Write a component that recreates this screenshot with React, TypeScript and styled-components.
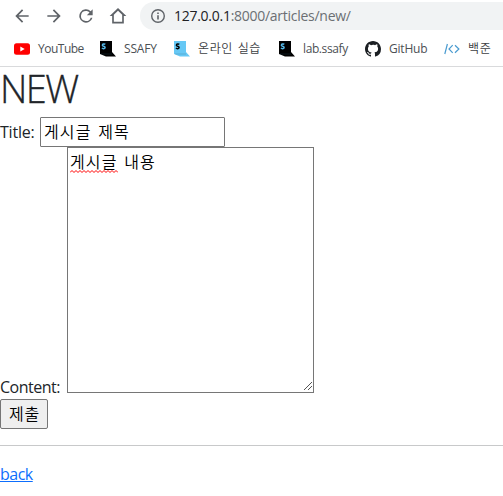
import React from 'react';
import styled, { createGlobalStyle } from 'styled-components';

const GlobalStyle = createGlobalStyle`
  *, *::before, *::after { box-sizing: border-box; }
  html, body { margin: 0; background: #fff; overflow: hidden; }
  body {
    font-family: "Open Sans", "Noto Sans CJK KR", sans-serif;
    font-size: 16px;
    line-height: 24px;
    color: #212529;
  }
`;

const Browser = styled.header`
  height: 67px;
  border-bottom: 1px solid #d9dadc;
`;
const Toolbar = styled.div`
  height: 32px;
  display: flex;
  align-items: center;
`;
const NavButtons = styled.div`
  display: flex;
  gap: 12px;
  padding-left: 12px;
  width: 140px;
  flex: none;
  svg { display: block; flex: none; }
`;
const AddressBar = styled.div`
  flex: 1;
  height: 28px;
  align-self: flex-end;
  margin-bottom: 2px;
  border-radius: 14px 0 0 14px;
  background: #f1f3f4;
  display: flex;
  align-items: center;
  padding-left: 10px;
  gap: 8px;
`;
const Url = styled.div`
  font-size: 14px;
  line-height: 20px;
  letter-spacing: -0.27px;
  color: #6b6f73;
  white-space: nowrap;
  b { font-weight: 400; color: #202124; }
`;
const Bookmarks = styled.nav`
  height: 34px;
  display: flex;
  padding-left: 14px;
  align-items: center;
`;
const Bookmark = styled.a<{ $width: number; $spacing?: number; $korean?: boolean }>`
  display: flex;
  flex: none;
  align-items: center;
  gap: 8px;
  width: ${(p) => p.$width}px;
  height: 16px;
  font-size: 12px;
  line-height: 16px;
  letter-spacing: ${(p) => p.$spacing ?? 0}px;
  word-spacing: 1px;
  color: ${(p) => (p.$korean ? '#3c4043' : '#4c5054')};
  font-weight: ${(p) => (p.$korean ? 350 : 400)};
  white-space: nowrap;
  svg { display: block; flex: none; }
`;

const Heading = styled.h1`
  margin: 0 0 2px;
  height: 48px;
  font-size: 38px;
  line-height: 43px;
  font-weight: 300;
  letter-spacing: -1.6px;
  -webkit-text-stroke: 0.3px #212529;
`;
const Row = styled.div<{ $end?: boolean }>`
  display: flex;
  align-items: ${(p) => (p.$end ? 'flex-end' : 'center')};
`;
const Label = styled.label<{ $width: number; $spacing: number; $drop?: boolean }>`
  width: ${(p) => p.$width}px;
  flex: none;
  font-size: 16px;
  line-height: 22px;
  letter-spacing: ${(p) => p.$spacing}px;
  margin-bottom: ${(p) => (p.$drop ? -5 : 0)}px;
  white-space: nowrap;
`;
const TextInput = styled.input`
  width: 185px;
  height: 30px;
  padding: 0 3px 2px;
  border: 1px solid #767676;
  border-radius: 1px;
  outline: 0;
  background: #fff;
  color: #000;
  font: 350 16px/24px "Noto Sans CJK KR", sans-serif;
  letter-spacing: 1.1px;
  word-spacing: 2px;
`;
const TextArea = styled.div`
  width: 247px;
  height: 246px;
  padding: 1px 2px 2px;
  border: 1px solid #767676;
  display: flex;
  flex-direction: column;
  justify-content: space-between;
  color: #000;
  font: 350 16px/24px "Noto Sans CJK KR", sans-serif;
  letter-spacing: 1.1px;
  word-spacing: 2px;
`;
const Misspelled = styled.span`
  display: inline-block;
  position: relative;
`;
const Squiggle = styled.svg`
  position: absolute;
  left: 0;
  bottom: 0;
`;
const Grip = styled.svg`
  display: block;
  align-self: flex-end;
  margin: 0 -2px -2px 0;
`;
const Submit = styled.button`
  display: block;
  width: 48px;
  height: 30px;
  margin-top: 6px;
  padding: 0 0 2px 1px;
  border: 1px solid #767676;
  border-radius: 2px;
  background: #efefef;
  color: #000;
  font: 350 16px/24px "Noto Sans CJK KR", sans-serif;
  letter-spacing: 0.8px;
`;
const Divider = styled.hr`
  margin: 16px 0;
  border: 0;
  height: 1px;
  background: #c8c9ca;
`;
const Back = styled.a`
  display: inline-block;
  font-size: 16px;
  letter-spacing: -0.5px;
  color: #0d6efd;
  text-decoration: underline;
`;

const icon = { fill: '#5f6368', width: 20, height: 20, viewBox: '0 0 24 24' };

function SsafyIcon({ page, letter }: { page: string; letter: string }) {
  return (
    <svg width="16" height="16" viewBox="0 0 16 16">
      <path d="M0 0H12V11L16 15.5H6L0 13Z" fill={page} />
      <path d="M5.3 3.4C4.6 2.8 2.4 2.9 2.4 4.2C2.4 5.5 5.1 5 5.1 6.6C5.1 7.9 2.7 7.9 2 7.1" fill="none" stroke={letter} strokeWidth="1.5" />
      <path d="M1 13H12" stroke={letter} strokeOpacity=".25" strokeWidth=".5" />
    </svg>
  );
}

export default function App() {
  return (
    <>
      <GlobalStyle />
      <Browser>
        <Toolbar>
          <NavButtons>
            <svg {...icon}><path d="M20 11H7.83l5.59-5.59L12 4l-8 8 8 8 1.41-1.41L7.83 13H20z" /></svg>
            <svg {...icon}><path d="M4 11h12.17l-5.59-5.59L12 4l8 8-8 8-1.41-1.41L16.17 13H4z" /></svg>
            <svg {...icon}><path d="M17.65 6.35A8 8 0 1 0 19.73 14h-2.08A6 6 0 1 1 12 6c1.66 0 3.14.69 4.22 1.78L13 11h7V4z" /></svg>
            <svg {...icon}><path d="M12 2.5 2 12h3v9h14v-9h3zM7 19v-8.4l5-4.9 5 4.9V19z" /></svg>
          </NavButtons>
          <AddressBar>
            <svg width="16" height="16" viewBox="0 0 16 16">
              <circle cx="8" cy="8" r="6.3" fill="none" stroke="#5f6368" strokeWidth="1.4" />
              <path d="M7.2 7.2h1.6v4.2H7.2zM7.2 4.5h1.6v1.6H7.2z" fill="#5f6368" />
            </svg>
            <Url><b>127.0.0.1</b>:8000/articles/new/</Url>
          </AddressBar>
        </Toolbar>
        <Bookmarks>
          <Bookmark $width={86} $spacing={-0.5}>
            <svg width="16" height="16" viewBox="0 0 16 16"><rect y="2.3" width="16" height="11.4" rx="2.5" fill="#f00" /><path d="m6.3 5.6 4.4 2.4-4.4 2.4z" fill="#fff" /></svg>
            YouTube
          </Bookmark>
          <Bookmark $width={74} $spacing={-0.2}><SsafyIcon page="#000" letter="#55b8e8" />SSAFY</Bookmark>
          <Bookmark $width={105} $spacing={0.6} $korean><SsafyIcon page="#66c8f5" letter="#000" />온라인 실습</Bookmark>
          <Bookmark $width={86} $spacing={-0.4}><SsafyIcon page="#000" letter="#55b8e8" />lab.ssafy</Bookmark>
          <Bookmark $width={79} $spacing={-0.2}>
            <svg width="16" height="16" viewBox="0 0 16 16" fill="#1b1f23"><path d="M8 0C3.58 0 0 3.58 0 8c0 3.54 2.29 6.53 5.47 7.59.4.07.55-.17.55-.38 0-.19-.01-.82-.01-1.49-2.01.37-2.53-.49-2.69-.94-.09-.23-.48-.94-.82-1.13-.28-.15-.68-.52-.01-.53.63-.01 1.08.58 1.23.82.72 1.21 1.87.87 2.33.66.07-.52.28-.87.51-1.07-1.78-.2-3.64-.89-3.64-3.95 0-.87.31-1.59.82-2.15-.08-.2-.36-1.02.08-2.12 0 0 .67-.21 2.2.82A7.6 7.6 0 0 1 8 3.87c.68 0 1.36.09 2 .27 1.53-1.04 2.2-.82 2.2-.82.44 1.1.16 1.92.08 2.12.51.56.82 1.27.82 2.15 0 3.07-1.87 3.75-3.65 3.95.29.25.54.73.54 1.48 0 1.07-.01 1.93-.01 2.2 0 .21.15.46.55.38A8.01 8.01 0 0 0 16 8c0-4.42-3.58-8-8-8z" /></svg>
            GitHub
          </Bookmark>
          <Bookmark $width={60} $spacing={0.6} $korean>
            <svg width="16" height="16" viewBox="0 0 16 16" fill="none" stroke="#4a9bd0" strokeWidth="1.2"><path d="M3.4 3 .8 13M8.7 4.2 5 8l3.7 3.8M11 4.2 14.9 8 11 11.8" /></svg>
            백준
          </Bookmark>
        </Bookmarks>
      </Browser>
      <main>
        <Heading>NEW</Heading>
        <Row>
          <Label $width={40} $spacing={-0.2}>Title:</Label>
          <TextInput defaultValue="게시글 제목" />
        </Row>
        <Row $end>
          <Label $width={67} $spacing={-0.5} $drop>Content:</Label>
          <TextArea>
            <div>
              <Misspelled>
                게시글
                <Squiggle width="48" height="3" viewBox="0 0 48 3">
                  <path d={'M0 2.5' + Array.from({ length: 12 }, () => 'l2-2 2 2').join('')} fill="none" stroke="#f00" strokeWidth="1" />
                </Squiggle>
              </Misspelled>{' '}내용
            </div>
            <Grip width="11" height="11" viewBox="0 0 11 11" stroke="#555" shapeRendering="crispEdges">
              <path d="M1.5 9.5l8-8M5.5 9.5l4-4" />
            </Grip>
          </TextArea>
        </Row>
        <Submit>제출</Submit>
        <Divider />
        <Back>back</Back>
      </main>
    </>
  );
}
